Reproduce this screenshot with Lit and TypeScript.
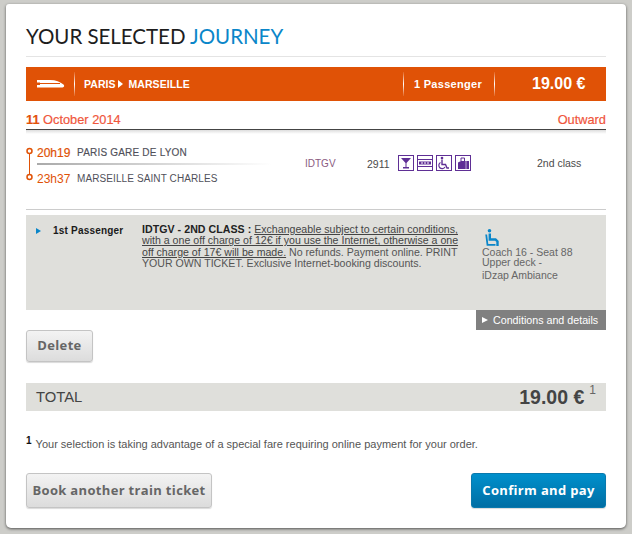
import { LitElement, html, svg, css } from "lit";
import { customElement } from "lit/decorators.js";

@customElement("app-root")
export class AppRoot extends LitElement {
  static styles = css`
    :host { display: block; width: 632px; height: 534px; overflow: hidden; background: #cdcdc9; font-family: "Liberation Sans", Arial, sans-serif; color: #4b4b4b; font-size: 11px; }
    * { box-sizing: border-box; }
    .page { width: 620px; height: 524px; margin: 4px 0 0 6px; background: #fff; border-radius: 3px 4px 5px 5px; box-shadow: 0 1px 3px rgba(0,0,0,.6); padding: 0 20px; display: flex; flex-direction: column; }
    h1 { margin: 0; height: 53px; padding-top: 20px; border-bottom: 1px solid #e4e4e4; font: 400 20.5px/24px Lato, sans-serif; letter-spacing: -.03px; color: #1d1d1d; }
    h1 span { color: #0a86c9; }
    .bar { margin-top: 10px; height: 34px; background: #e05206; color: #fff; display: flex; align-items: center; font-weight: 700; }
    .train { width: 48px; padding-left: 11px; display: flex; }
    .sep { width: 1px; height: 24px; background: linear-gradient(to bottom, rgba(255,255,255,.1), #fff 50%, rgba(255,255,255,.1)); }
    .route { flex: 1; padding-left: 9px; font-size: 10.5px; letter-spacing: .05px; display: flex; align-items: center; }
    .route i { width: 0; height: 0; border-left: 5px solid #fff; border-top: 4.5px solid transparent; border-bottom: 4.5px solid transparent; margin: 0 6px 0 2px; }
    .pax { width: 90px; padding-right: 2px; text-align: center; font-size: 11px; letter-spacing: .3px; }
    .price { flex: none; width: 111px; padding-left: 37px; font-size: 16px; }
    .date { height: 29px; border-bottom: 1px solid #444; display: flex; justify-content: space-between; align-items: flex-end; padding-bottom: 2px; color: #f0563c; font-size: 12.8px; font-weight: 400; -webkit-text-stroke: .2px #f0563c; }
    .date b { color: #e05206; }
    .shade { height: 4px; background: linear-gradient(#ddd, #fff); }
    .leg { height: 76px; border-bottom: 1px solid #ccc; display: grid; grid-template-columns: 279px 62px 32px 130px 1fr; align-items: start; }
    .times { position: relative; padding: 12px 0 0 11px; }
    .row { display: flex; height: 26px; align-items: flex-start; line-height: 14px; }
    .row b { width: 40px; font-weight: 400; font-size: 12px; color: #e05206; -webkit-text-stroke: .2px #e05206; }
    .row span { font-size: 10px; letter-spacing: .1px; color: #50505a; }
    .row.first span { letter-spacing: .2px; -webkit-text-stroke: .15px #50505a; }
    .row.last b { -webkit-text-stroke: 0; }
    .divider { position: absolute; left: 11px; top: 29px; width: 235px; height: 2px; background: linear-gradient(to right, #aaa, #fff); }
    .dots { position: absolute; left: 0; top: 13px; }
    .code, .num { line-height: 14px; padding-top: 23px; }
    .code { font-size: 10px; color: #8a5a80; }
    .num { font-size: 10.5px; }
    .icons { display: flex; gap: 3px; padding-top: 21px; margin-left: -1px; }
    .icons svg { display: block; }
    .cls { padding-top: 22px; padding-left: 8px; line-height: 14px; font-size: 10.5px; white-space: nowrap; }
    .detail { margin-top: 5px; height: 95px; background: #dfdfdb; display: grid; grid-template-columns: 116px 325px 1fr; }
    .who { padding: 10px 0 0 10px; font-weight: 700; color: #1a1a1a; font-size: 10px; letter-spacing: .2px; display: flex; gap: 12px; line-height: 12px; }
    .who i { width: 0; height: 0; margin-top: 3px; border-left: 5px solid #0a86c9; border-top: 3px solid transparent; border-bottom: 3px solid transparent; }
    .desc { padding: 9px 0 0 0; width: 318px; font-size: 10.6px; line-height: 11.3px; color: #555; }
    .desc b { color: #222; letter-spacing: .05px; }
    .desc u { color: #444; }
    .seat { padding: 14px 0 0 15px; font-size: 10.5px; color: #666; }
    .seat svg { display: block; margin: 0 0 0 3px; }
    .seat div { line-height: 10px; }
    .seat .amb { margin-top: 2.5px; }
    .cond { align-self: flex-end; width: 130px; height: 20px; background: #808080; color: #fff; font-size: 10.7px; line-height: 20px; display: flex; align-items: center; padding-left: 6px; gap: 5px; }
    .cond i { width: 0; height: 0; border-left: 6px solid #fff; border-top: 3.5px solid transparent; border-bottom: 3.5px solid transparent; }
    .btn { border: 1px solid #c4c4c4; border-radius: 3px; background: linear-gradient(#f3f3f3, #dcdcdc); font: 700 13px/1 "Open Sans", sans-serif; letter-spacing: .33px; color: #666; display: flex; align-items: center; justify-content: center; box-shadow: 0 1px 1px rgba(0,0,0,.15); }
    .del { width: 67px; height: 32px; padding-bottom: 2px; }
    .total { margin-top: 21px; height: 28px; background: #dfdfdb; display: flex; justify-content: space-between; align-items: center; padding: 0 10px; font-size: 14.8px; color: #444; }
    .amt { font-size: 19.5px; font-weight: 700; color: #444; display: flex; align-items: center; }
    .amt sup { font-size: 12px; font-weight: 400; margin: -14px 0 0 5px; color: #666; line-height: 1; }
    .note { margin-top: 24px; height: 18px; font-size: 11px; line-height: 18px; color: #555; display: flex; }
    .note sup { font-size: 10px; line-height: 12px; font-weight: 700; color: #111; margin-right: 4px; }
    .actions { margin-top: 20px; display: flex; justify-content: space-between; }
    .again { width: 186px; height: 35px; }
    .pay { width: 135px; height: 35px; background: linear-gradient(#0090cc, #006ea4); border-color: #0a79ad; color: #fff; }
  `;

  private icon(inner: unknown) {
    return html`<svg width="16" height="16" viewBox="0 0 16 16"><rect x=".5" y=".5" width="15" height="15" fill="#fff" stroke="#5f2f95"/>${inner}</svg>`;
  }

  render() {
    return html`<div class="page">
      <h1>YOUR SELECTED <span>JOURNEY</span></h1>
      <div class="bar">
        <div class="train"><svg width="28" height="10" viewBox="0 0 28 10"><path d="M0 1h13c6 0 10 2 13.500 4.500 1 1 1 2.500-1 3H0V6h3V3.500H0z" fill="#fff"/><path d="M3 4.500h20" stroke="#e05206" stroke-width="1"/></svg></div>
        <div class="sep"></div>
        <div class="route">PARIS<i></i>MARSEILLE</div>
        <div class="sep"></div>
        <div class="pax">1 Passenger</div>
        <div class="sep"></div>
        <div class="price">19.00 €</div>
      </div>
      <div class="date"><span><b>11</b> October 2014</span><span>Outward</span></div>
      <div class="shade"></div>
      <div class="leg">
        <div class="times">
          <svg class="dots" width="9" height="34" viewBox="0 0 9 34"><circle cx="3.500" cy="4" r="2.500" fill="#fff" stroke="#e05206" stroke-width="1.500"/><path d="M3.500 7v21" stroke="#e05206"/><circle cx="3.500" cy="30" r="2.500" fill="#fff" stroke="#e05206" stroke-width="1.500"/></svg>
          <div class="divider"></div>
          <div class="row first"><b>20h19</b><span>PARIS GARE DE LYON</span></div>
          <div class="row last"><b>23h37</b><span>MARSEILLE SAINT CHARLES</span></div>
        </div>
        <div class="code">IDTGV</div>
        <div class="num">2911</div>
        <div class="icons">
          ${this.icon(svg`<path d="M3 3h10L8.500 8v4H11v1.500H5V12h2.500V8z" fill="#5f2f95"/>`)}
          ${this.icon(svg`<path d="M1 4.500h14M1 11.500h14" stroke="#5f2f95"/><path d="M2 6.500h12v3H2z" fill="#5f2f95"/><path d="M4 8h8" stroke="#fff" stroke-dasharray="2 1"/>`)}
          ${this.icon(svg`<circle cx="6" cy="3" r="1.300" fill="#5f2f95"/><path d="M6 4.500v5h3.500l1.500 3.500h2" fill="none" stroke="#5f2f95" stroke-width="1.400"/><path d="M4.500 7.500a3.300 3.300 0 1 0 4.500 4.500" fill="none" stroke="#5f2f95" stroke-width="1.200"/>`)}
          ${this.icon(svg`<path d="M3 7.500l3-1.500h8v8H3z" fill="#5f2f95"/><path d="M6 6V3h3.500v3" fill="none" stroke="#5f2f95"/><path d="M11 6v8" stroke="#fff" stroke-width=".6"/>`)}
        </div>
        <div class="cls">2nd class</div>
      </div>
      <div class="detail">
        <div class="who"><i></i><span>1st Passenger</span></div>
        <div class="desc"><b>IDTGV - 2ND CLASS :</b> <u>Exchangeable subject to certain conditions, with a one off charge of 12€ if you use the Internet, otherwise a one off charge of 17€ will be made.</u> No refunds. Payment online. PRINT YOUR OWN TICKET. Exclusive Internet-booking discounts.</div>
        <div class="seat">
          <svg width="14" height="18" viewBox="0 0 14 18"><circle cx="4.500" cy="1.800" r="1.800" fill="#0a86c9"/><path d="M1.200 5.500L2.500 15.800H10.500" fill="none" stroke="#0a86c9" stroke-width="1.800"/><path d="M4.800 4.500V10.500H10.500L12.500 12.500V17" fill="none" stroke="#0a86c9" stroke-width="2.400"/></svg>
          <div>Coach 16 - Seat 88</div><div>Upper deck -</div><div class="amb">iDzap Ambiance</div>
        </div>
      </div>
      <div class="cond"><i></i>Conditions and details</div>
      <div class="btn del">Delete</div>
      <div class="total"><span>TOTAL</span><span class="amt">19.00 €<sup>1</sup></span></div>
      <div class="note"><sup>1</sup><span>Your selection is taking advantage of a special fare requiring online payment for your order.</span></div>
      <div class="actions"><div class="btn again">Book another train ticket</div><div class="btn pay">Confirm and pay</div></div>
    </div>`;
  }
}
